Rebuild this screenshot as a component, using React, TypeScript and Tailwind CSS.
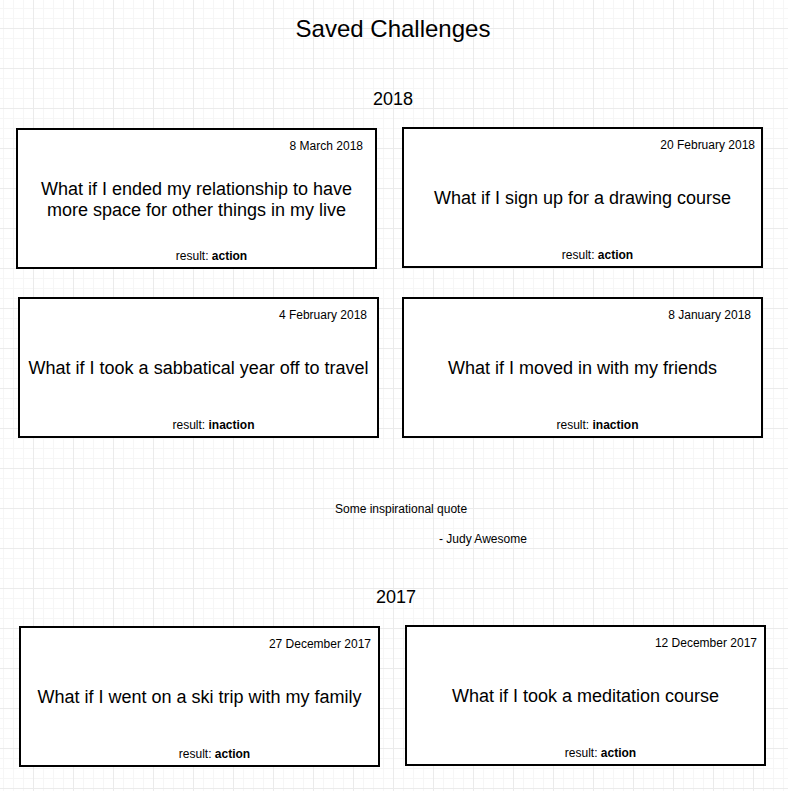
import React from 'react';

type Challenge = {
  date: string;
  text: string;
  result: string;
  offset: string; // left margin / top nudge of the card in its row
  datePad: string;
};

const rows2018: Challenge[][] = [
  [
    {
      date: '8 March 2018',
      text: 'What if I ended my relationship to have more space for other things in my live',
      result: 'action',
      offset: 'ml-[16px] mt-[1px]',
      datePad: 'pr-[12px]',
    },
    {
      date: '20 February 2018',
      text: 'What if I sign up for a drawing course',
      result: 'action',
      offset: 'ml-[25px]',
      datePad: 'pr-[6px]',
    },
  ],
  [
    {
      date: '4 February 2018',
      text: 'What if I took a sabbatical year off to travel',
      result: 'inaction',
      offset: 'ml-[18px]',
      datePad: 'pr-[10px]',
    },
    {
      date: '8 January 2018',
      text: 'What if I moved in with my friends',
      result: 'inaction',
      offset: 'ml-[23px]',
      datePad: 'pr-[10px]',
    },
  ],
];

const rows2017: Challenge[][] = [
  [
    {
      date: '27 December 2017',
      text: 'What if I went on a ski trip with my family',
      result: 'action',
      offset: 'ml-[19px] mt-[1px]',
      datePad: 'pr-[7px]',
    },
    {
      date: '12 December 2017',
      text: 'What if I took a meditation course',
      result: 'action',
      offset: 'ml-[25px]',
      datePad: 'pr-[7px]',
    },
  ],
];

const ChallengeCard = ({ c }: { c: Challenge }) => (
  <div className={`w-[361px] h-[141px] shrink-0 bg-white border-2 border-black flex flex-col ${c.offset}`}>
    <div className={`h-[23px] pt-[9px] text-right text-[12px] leading-[14px] ${c.datePad}`}>{c.date}</div>
    <div className="flex-1 flex items-center justify-center px-[6px] pt-[2px] text-center text-[18px] leading-[21px]">
      {c.text}
    </div>
    <div className="h-[23px] flex items-end justify-center pb-[4px] pl-[30px] text-[12px] leading-[14px]">
      <span>
        result: <span className="font-bold">{c.result}</span>
      </span>
    </div>
  </div>
);

const App = () => {
  return (
    <div
      className="min-h-screen w-full bg-white text-black font-['Liberation_Sans',Arial,sans-serif] bg-[linear-gradient(to_right,#ebebeb_1px,transparent_1px),linear-gradient(to_bottom,#ebebeb_1px,transparent_1px),linear-gradient(to_right,#f6f6f6_1px,transparent_1px),linear-gradient(to_bottom,#f6f6f6_1px,transparent_1px)] bg-[length:40px_40px,40px_40px,10px_10px,10px_10px] bg-[position:33px_28px,33px_28px,3px_8px,3px_8px]"
    >
      {/* Header */}
      <h1 className="pt-[15px] text-center text-[24px] leading-[28px] pr-[2px]">Saved Challenges</h1>

      {/* 2018 */}
      <h2 className="mt-[46px] text-center text-[18px] leading-[20px] pr-[2px]">2018</h2>
      <div className="mt-[18px] flex flex-col gap-[28px]">
        {rows2018.map((row, i) => (
          <div key={i} className="flex items-start">
            {row.map((c) => (
              <ChallengeCard key={c.date} c={c} />
            ))}
          </div>
        ))}
      </div>

      {/* Quote */}
      <div className="mt-[64px] text-[12px] leading-[14px]">
        <p className="pl-[335px]">Some inspirational quote</p>
        <p className="mt-[16px] pl-[439px]">- Judy Awesome</p>
      </div>

      {/* 2017 */}
      <h2 className="mt-[41px] text-center text-[18px] leading-[20px] pl-[4px]">2017</h2>
      <div className="mt-[18px] flex flex-col">
        {rows2017.map((row, i) => (
          <div key={i} className="flex items-start">
            {row.map((c) => (
              <ChallengeCard key={c.date} c={c} />
            ))}
          </div>
        ))}
      </div>
    </div>
  );
};

export default App;
